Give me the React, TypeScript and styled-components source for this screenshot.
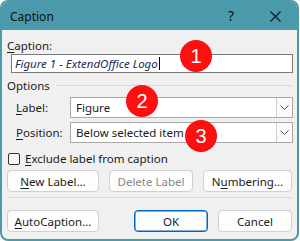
import styled, { createGlobalStyle } from "styled-components";

const GlobalStyle = createGlobalStyle`
  html, body {
    margin: 0;
    padding: 0;
    background: #ffffff;
  }
  body {
    font-family: "Noto Sans", "Open Sans", sans-serif;
    font-size: 11.5px;
    color: #1a1a1a;
  }
`;

const Window = styled.div`
  position: relative;
  width: 299px;
  height: 241px;
  box-sizing: border-box;
  border: 2px solid #4a9aab;
  border-radius: 8px;
  background: #f0f0f0;
  overflow: hidden;
  display: flex;
  flex-direction: column;
`;

const TitleBar = styled.div`
  height: 28px;
  margin-top: -2px;
  padding-top: 2px;
  background: #4a9aab;
  display: flex;
  align-items: center;
  padding-left: 8px;
  padding-right: 16px;
  font-size: 12px;
  color: #111;
`;

const Title = styled.span`
  flex: 1;
`;

const TitleIcon = styled.span<{ $gap?: number }>`
  display: flex;
  align-items: center;
  justify-content: center;
  width: 12px;
  height: 12px;
  margin-left: ${(p) => p.$gap ?? 0}px;
  font-size: 14px;
  line-height: 12px;
`;

const Body = styled.div`
  padding: 8px 4px 0 5px;
  display: flex;
  flex-direction: column;
`;

const U = styled.span`
  text-decoration: underline;
  text-underline-offset: 2px;
`;

const FieldLabel = styled.div`
  height: 16px;
  line-height: 16px;
`;

const CaptionInput = styled.div`
  margin-left: 4px;
  height: 19px;
  box-sizing: border-box;
  border: 1px solid #7a7a7a;
  background: #fff;
  display: flex;
  align-items: center;
  padding-left: 3px;
  font-style: italic;
  color: #1f2b57;
`;

const Caret = styled.span`
  display: inline-block;
  width: 1px;
  height: 13px;
  background: #000;
  margin-left: 1px;
`;

const GroupHead = styled.div`
  display: flex;
  align-items: center;
  gap: 6px;
  margin-top: 4px;
  height: 16px;
`;

const Rule = styled.div`
  flex: 1;
  height: 1px;
  background: #dadada;
`;

const OptionsGrid = styled.div`
  display: grid;
  grid-template-columns: 54px 1fr;
  row-gap: 4px;
  margin-top: 4px;
  padding-left: 9px;
  align-items: center;
`;

const Combo = styled.div`
  height: 21px;
  box-sizing: border-box;
  border: 1px solid #a8a8a8;
  background: #fff;
  display: flex;
  align-items: center;
  padding-left: 5px;
`;

const ComboText = styled.span`
  flex: 1;
`;

const DropButton = styled.span`
  width: 16px;
  height: 19px;
  box-sizing: border-box;
  border-left: 1px solid #d0d0d0;
  background: #fafafa;
  display: flex;
  align-items: center;
  justify-content: center;
`;

const CheckRow = styled.label`
  display: flex;
  align-items: center;
  gap: 5px;
  margin-top: 9px;
  padding-left: 1px;
  height: 13px;
`;

const Box = styled.span`
  width: 12px;
  height: 12px;
  box-sizing: border-box;
  border: 1px solid #333;
  border-radius: 2px;
  background: #f7f7f7;
`;

const ButtonRow = styled.div<{ $cols: string; $top?: number }>`
  display: grid;
  grid-template-columns: ${(p) => p.$cols};
  margin-top: ${(p) => p.$top ?? 0}px;
`;

const Button = styled.div<{ $primary?: boolean; $disabled?: boolean }>`
  height: 22px;
  box-sizing: border-box;
  border: 1px solid ${(p) => (p.$primary ? "#0067c0" : "#d0d0d0")};
  box-shadow: ${(p) => (p.$primary ? "inset 0 0 0 0.5px #0067c0" : "none")};
  border-radius: 4px;
  background: #fdfdfd;
  display: flex;
  align-items: center;
  justify-content: center;
  color: ${(p) => (p.$disabled ? "#8a8a8a" : "#1a1a1a")};
`;

const Divider = styled.div`
  height: 1px;
  background: #dadada;
  margin: 5px 1px 12px 0;
`;

const Badge = styled.div<{ $x: number; $y: number }>`
  position: absolute;
  left: ${(p) => p.$x}px;
  top: ${(p) => p.$y}px;
  width: 32px;
  height: 32px;
  border-radius: 50%;
  background: radial-gradient(circle at 50% 45%, #ff1010 60%, #e00000 100%);
  color: #fff;
  font-family: "Liberation Sans", Arial, sans-serif;
  font-size: 20px;
  display: flex;
  align-items: center;
  justify-content: center;
`;

const Chevron = () => (
  <svg width="9" height="5" viewBox="0 0 9 5">
    <path d="M0.5 0.5 L4.5 4.5 L8.5 0.5" fill="none" stroke="#555" strokeWidth="1" />
  </svg>
);

export default function App() {
  return (
    <>
      <GlobalStyle />
      <Window>
        <TitleBar>
          <Title>Caption</Title>
          <TitleIcon>?</TitleIcon>
          <TitleIcon $gap={32}>
            <svg width="11" height="11" viewBox="0 0 11 11">
              <path d="M0.5 0.5 L10.5 10.5 M10.5 0.5 L0.5 10.5" stroke="#111" strokeWidth="1.1" />
            </svg>
          </TitleIcon>
        </TitleBar>
        <Body>
          <FieldLabel>
            <U>C</U>aption:
          </FieldLabel>
          <CaptionInput>
            Figure 1 - ExtendOffice Logo
            <Caret />
          </CaptionInput>
          <GroupHead>
            Options
            <Rule />
          </GroupHead>
          <OptionsGrid>
            <span>
              <U>L</U>abel:
            </span>
            <Combo>
              <ComboText>Figure</ComboText>
              <DropButton>
                <Chevron />
              </DropButton>
            </Combo>
            <span>
              <U>P</U>osition:
            </span>
            <Combo>
              <ComboText>Below selected item</ComboText>
              <DropButton>
                <Chevron />
              </DropButton>
            </Combo>
          </OptionsGrid>
          <CheckRow>
            <Box />
            <span>
              <U>E</U>xclude label from caption
            </span>
          </CheckRow>
          <ButtonRow $cols="92px 10px 84px 10px 89px" $top={5}>
            <Button>
              <span>
                <U>N</U>ew Label...
              </span>
            </Button>
            <span />
            <Button $disabled>Delete Label</Button>
            <span />
            <Button>
              <span>
                N<U>u</U>mbering...
              </span>
            </Button>
          </ButtonRow>
          <Divider />
          <ButtonRow $cols="92px 35px 74px 10px 74px">
            <Button>
              <span>
                <U>A</U>utoCaption...
              </span>
            </Button>
            <span />
            <Button $primary>OK</Button>
            <span />
            <Button>Cancel</Button>
          </ButtonRow>
        </Body>
        <Badge $x={178} $y={38}>1</Badge>
        <Badge $x={124} $y={83}>2</Badge>
        <Badge $x={183} $y={118}>3</Badge>
      </Window>
    </>
  );
}
